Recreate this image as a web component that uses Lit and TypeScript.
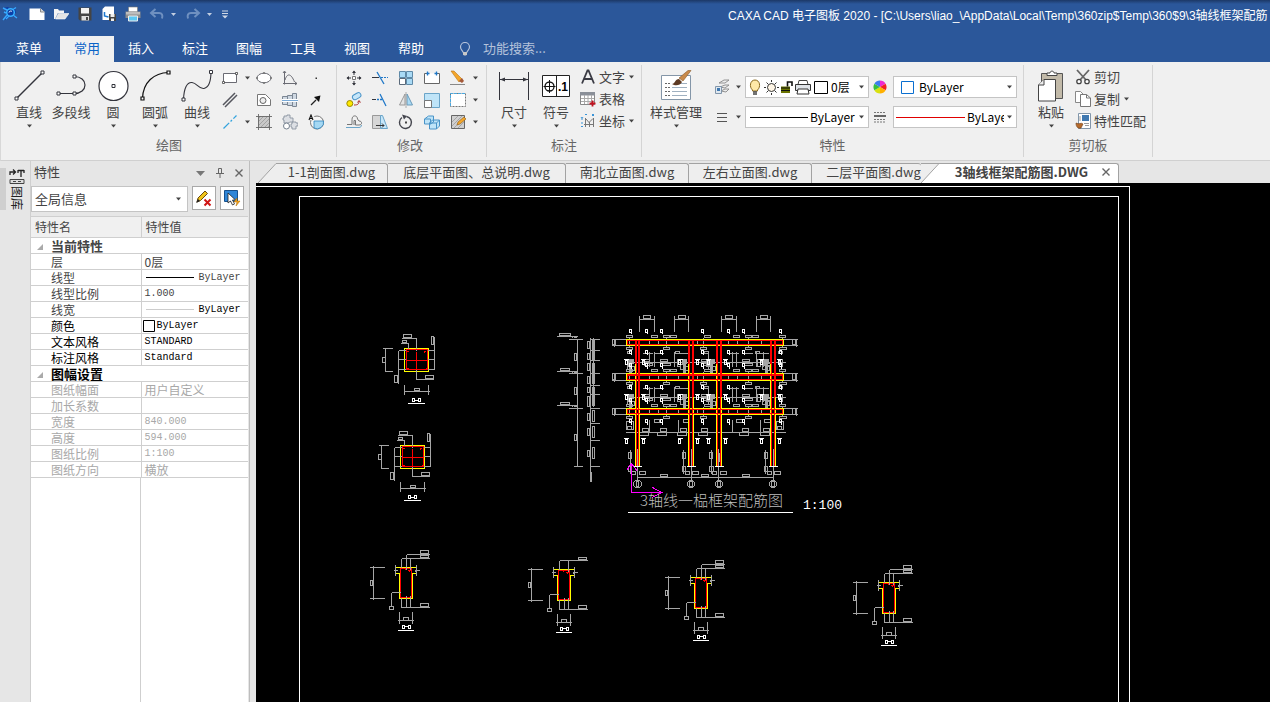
import { LitElement, html, svg, css, nothing, TemplateResult } from "lit";
import { customElement, state } from "lit/decorators.js";
import { classMap } from "lit/directives/class-map.js";

const arrow = html`<svg class="arrow" width="7" height="8" viewBox="0 0 7 8" aria-hidden="true"><path d="M1 2.500h5L3.500 5.500z" fill="#444" /></svg>`;

/* ---------- quick access icons ---------- */
const logo = html`<svg width="16" height="16" viewBox="0 0 16 16" aria-hidden="true">
  <path d="M1 2l4 2-2 3 2 1-2 6 6-4 4 1-2-3 3-1-1-5-4 1-3-2z" fill="#0b3fa8" />
  <circle cx="8.500" cy="6.500" r="3.800" fill="none" stroke="#37b2ff" stroke-width="1.500" />
  <path d="M1 2l4 2M2 6l2 1M1 14l4-5M4 13l3-3M11 9l4 3M14 1.500l-3 2" stroke="#39a8ff" stroke-width="1.400" />
  <path d="M7 6.500a1.800 1.800 0 0 1 3-1" fill="none" stroke="#d8f0ff" /></svg>`;
const qNew = html`<svg width="16" height="16" viewBox="0 0 16 16"><path d="M.5 2.500h11l4 3.500v8H.5z" fill="#fff" /><path d="M11.500 2.500V6h4" fill="#d5d5d5" stroke="#8a8a8a" /></svg>`;
const qOpen = html`<svg width="16" height="16" viewBox="0 0 16 16"><path d="M1 3h4l1 1.500h5V7H5l-3 6H1z" fill="#f4f4f4" /><path d="M5.500 7.500H16L12 13H2.500z" fill="#e4e4e4" stroke="#fff" stroke-width=".6" /></svg>`;
const qSave = html`<svg width="16" height="16" viewBox="0 0 16 16"><path d="M1.500 1.500h13v13H3L1.500 13z" fill="#444" /><path d="M4 2h8v5.500H4z" fill="#f2f2f2" /><path d="M4.500 10h7.500v4.500H4.500z" fill="#dcdcdc" /><path d="M9 11h2v3H9z" fill="#444" /></svg>`;
const qSaveAs = html`<svg width="16" height="16" viewBox="0 0 16 16"><path d="M4 .5h9v13.500H1.500V3z" fill="#fff" /><path d="M3.500 6v4l4 1" fill="none" stroke="#1c78d0" stroke-width="1.500" /><path d="M8 8h7v7H8z" fill="#444" /><path d="M9.500 8h4v3h-4zM10 12.500h3V15h-3z" fill="#eee" /></svg>`;
const qPrint = html`<svg width="16" height="16" viewBox="0 0 16 16"><path d="M3.500 1h9v5h-9z" fill="#fff" stroke="#777" stroke-width=".6" /><path d="M.5 5.500h15V12H.5z" fill="#8d8d8d" /><path d="M1 6h14v2.500H1z" fill="#bdbdbd" /><path d="M3.500 10h9v5h-9z" fill="#5ec8f2" stroke="#eee" /></svg>`;
const qUndo = html`<svg width="16" height="16" viewBox="0 0 16 16"><path d="M6.500 3L2 7l4.500 4M2.500 7H10c3 0 4 2 3 5.500" fill="none" stroke="#6f90c0" stroke-width="2" /></svg>`;
const qRedo = html`<svg width="16" height="16" viewBox="0 0 16 16"><path d="M9.500 3L14 7l-4.500 4M13.500 7H6c-3 0-4 2-3 5.500" fill="none" stroke="#6f90c0" stroke-width="2" /></svg>`;
const qMore = html`<svg width="8" height="16" viewBox="0 0 8 16"><path d="M1 5h6M1 7.500h6" stroke="#d0d8e4" /><path d="M1 9.500h6L4 12.500z" fill="#d0d8e4" /></svg>`;
const lightArrow = html`<svg width="7" height="16" viewBox="0 0 7 16"><path d="M1 7h5L3.500 10z" fill="#c3cfe2" /></svg>`;

/* ---------- large ribbon icons ---------- */
const sq = (x: number, y: number) => `M${x - 1.5} ${y - 1.5}h3v3h-3z`;
const bLine = html`<svg width="32" height="32" viewBox="0 0 32 32"><path d="M3.500 28.500l26-26" stroke="#33343c" stroke-width="1.500" /><path d=${sq(3.5, 28.5) + sq(29.5, 2.5)} fill="#fff" stroke="#33343c" /></svg>`;
const bPoly = html`<svg width="32" height="32" viewBox="0 0 32 32"><path d="M3 23.500h16c7 0 11-4 11-8.500s-4-8.500-11-8.500" fill="none" stroke="#33343c" stroke-width="1.200" /><path d=${sq(3.5, 23.5) + sq(19.5, 23.5) + sq(19.5, 6.5)} fill="#fff" stroke="#33343c" /></svg>`;
const bCircle = html`<svg width="32" height="32" viewBox="0 0 32 32"><circle cx="16.500" cy="16" r="14.500" fill="#fff" stroke="#33343c" stroke-width="1.200" /><path d=${sq(16.5, 16)} fill="#fff" stroke="#33343c" /></svg>`;
const bArc = html`<svg width="32" height="32" viewBox="0 0 32 32"><path d="M3.500 28.500C4 12 15 3 29.500 2.500" fill="none" stroke="#111" stroke-width="1.200" /><path d=${sq(3.5, 28.5) + sq(29.5, 2.5)} fill="#fff" stroke="#111" stroke-width="1.200" /></svg>`;
const bCurve = html`<svg width="32" height="32" viewBox="0 0 32 32"><path d="M2.500 29.500C3 18 6 12 11 12.500c5 .5 7 7 12 6 6-1.500 7-10 7-17" fill="none" stroke="#33343c" stroke-width="1.100" /><path d=${sq(2.5, 29.5) + sq(30, 2)} fill="#fff" stroke="#33343c" /></svg>`;
const bDim = html`<svg width="32" height="32" viewBox="0 0 32 32"><path d="M1.500 2v28M30.500 2v28M2 9.500h28" stroke="#33343c" /><path d="M2 9.500l5-2v4zM30 9.500l-5-2v4z" fill="#33343c" /></svg>`;
const bSymbol = html`<svg width="32" height="32" viewBox="0 0 32 32"><path d="M2.500 5.500h27v21h-27zM16.500 5.500v21" fill="#fff" stroke="#222" /><circle cx="9.500" cy="16.500" r="4.500" fill="none" stroke="#111" stroke-width="1.300" /><path d="M3.500 16.500h12M9.500 10v13" stroke="#111" /><text x="18" y="21" font-family="Liberation Sans, sans-serif" font-size="12" font-weight="700">.1</text></svg>`;
const bStyle = html`<svg width="32" height="32" viewBox="0 0 32 32"><path d="M1.500 5.500h29v24h-29z" fill="#fff" stroke="#8496a8" /><path d="M5 13.500h5M5 17.500h5M5 21.500h5M5 25.500h5" stroke="#666" stroke-dasharray="2 1" /><path d="M12 17.500h15M12 21.500h15M12 25.500h15M20 13.500h7" stroke="#9fb0c0" /><path d="M12 14c3 0 3-5 7-5l3 3c-2 4-7 4-10 2z" fill="#5d3a22" /><path d="M19 8l9-7.500L31 .5 23 11z" fill="#c98a4b" stroke="#8a5a2a" stroke-width=".6" /></svg>`;
const bPaste = html`<svg width="32" height="32" viewBox="0 0 32 32"><path d="M6.500 3.500h21v25h-21z" fill="#c2baa9" stroke="#555" /><path d="M12 5.500V3h3C15 .5 19 .5 19 3h3v2.500z" fill="#fff" stroke="#444" /><path d="M9 9.500h11.500v21.500H3.500V15z" fill="#fff" stroke="#444" /><path d="M9 9.500V15H3.500" fill="#eee" stroke="#444" /></svg>`;

/* ---------- small ribbon icons ---------- */
const sRect = html`<svg width="16" height="16" viewBox="0 0 16 16"><path d="M1.500 3.500h13v9h-13z" fill="#fff" stroke="#6a6b73" /><path d="M.5 11.500h2v2h-2zM13.500 2.500h2v2h-2z" fill="#fff" stroke="#444" stroke-width=".8" /></svg>`;
const sEllipse = html`<svg width="16" height="16" viewBox="0 0 16 16"><ellipse cx="8" cy="8" rx="7" ry="4.800" fill="#fff" stroke="#6a6b73" /><path d="M7.500 2.500h1v1h-1zM7.500 12.500h1v1h-1zM.5 7.500h1v1h-1zM14.500 7.500h1v1h-1z" fill="#fff" stroke="#555" stroke-width=".7" /></svg>`;
const sGraph = html`<svg width="16" height="16" viewBox="0 0 16 16"><path d="M2.500 1.500v13M1 13.500h14M1 3l1.500-2L4 3M13 12l2 1.500-2 1.500M3 10c2-7 6-7 9.500 2" fill="none" stroke="#6a6b73" /></svg>`;
const sPoint = html`<svg width="16" height="16" viewBox="0 0 16 16"><path d="M7.500 7.500h1.500v1.500H7.500z" fill="#333" /></svg>`;
const sParallel = html`<svg width="16" height="16" viewBox="0 0 16 16"><path d="M1 13L13 1M3 15L15 3" stroke="#55565e" stroke-width="1.500" /></svg>`;
const sHole = html`<svg width="16" height="16" viewBox="0 0 16 16"><path d="M1.500 2.500h8l5 5v6h-13z" fill="#fff" stroke="#777" /><circle cx="7" cy="8.500" r="3" fill="#eee" stroke="#666" /></svg>`;
const sShaft = html`<svg width="16" height="16" viewBox="0 0 16 16"><path d="M.5 4.500h5v8h-5zM5.500 3.500h5v10h-5zM10.500 1.500h4v13h-4z" fill="#cfd8e2" stroke="#7c8794" /><path d="M0 8.500h16" stroke="#fff" stroke-width="3" /><path d="M0 8.500h16" stroke="#79aad8" /></svg>`;
const sPointer = html`<svg width="16" height="16" viewBox="0 0 16 16"><path d="M3 13l5-5" stroke="#222" stroke-width="1.300" /><path d="M12.500 3.500L11 10 6 5z" fill="#111" /></svg>`;
const sCenter = html`<svg width="16" height="16" viewBox="0 0 16 16"><path d="M1.500 14.500l13-13" stroke="#34a4de" stroke-width="1.300" stroke-dasharray="8 2 2 2" /></svg>`;
const hatchBody = html`<svg width="16" height="16" viewBox="0 0 16 16"><path d="M2 2h12v12H2z" fill="#c9c9c9" /><path d="M2 8l6-6M2 12L12 2M4 14L14 4M8 14l6-6M2 5l3-3M11 14l3-3" stroke="#999" stroke-width=".8" /><path d="M2.500 0v16M13.500 0v16M0 2.500h16M0 13.500h16" stroke="#666" stroke-width=".9" /></svg>`;
const sGears = html`<svg width="16" height="16" viewBox="0 0 16 16"><path d="M2 2h3V1h3v3h3v4H8l-2 1H2V6H1V4h1zM10 8h4v1h2v3h-2v3h-4v-2H9v-3h1z" fill="#dcdfe4" stroke="#8a94a0" stroke-width=".9" /><circle cx="4.500" cy="12" r="3" fill="#fff" stroke="#74808e" /></svg>`;
const sDetail = html`<svg width="16" height="16" viewBox="0 0 16 16"><circle cx="9" cy="8.500" r="6.500" fill="#f6f6f6" stroke="#777" /><path d="M6 7h9.500A6.500 6.500 0 0 1 6 14z" fill="#a5d8f3" stroke="#2f85bf" stroke-width=".8" /><path d="M0 0h6v6H0z" fill="#f0f0f0" /><path d="M1 6l2-5 2 5M1.500 4.500h3" fill="none" stroke="#111" stroke-width="1.100" /></svg>`;

const mMove = html`<svg width="16" height="16" viewBox="0 0 16 16"><path d="M8 1v4M8 11v4M1 8h4M11 8h4" stroke="#33343c" /><path d="M8 .5l2 2.500H6zM8 15.500l2-2.500H6zM.5 8L3 6v4zM15.500 8L13 6v4z" fill="#33343c" /><path d="M6.500 6.500h3v3h-3z" fill="#fff" stroke="#777" /></svg>`;
const mTrim = html`<svg width="16" height="16" viewBox="0 0 16 16"><path d="M0 7.500h7" stroke="#33343c" /><path d="M9 7.500h7" stroke="#1f78c8" stroke-dasharray="2 1" /><path d="M5 2l7 12" stroke="#1f78c8" stroke-width="1.300" /></svg>`;
const mArray = html`<svg width="16" height="16" viewBox="0 0 16 16"><path d="M1.500 1.500h6v6h-6zM8.500 1.500h6v6h-6zM8.500 8.500h6v6h-6z" fill="#a9daf5" stroke="#5f8aa8" /><path d="M1.500 8.500h6v6h-6z" fill="#fff" stroke="#5b6a7a" /></svg>`;
const mStretch = html`<svg width="16" height="16" viewBox="0 0 16 16"><path d="M5 3.500H.5v10h15v-10H11" fill="#fff" stroke="#666" /><path d="M2.500 3.500h3M10.500 3.500h3M3.500 1.500v4M12.500 1.500v4" stroke="#1f78c8" stroke-width="1.300" /></svg>`;
const mErase = html`<svg width="16" height="16" viewBox="0 0 16 16"><path d="M1 1l3 0 8 8-3 3z" fill="#f4a62a" stroke="#b8741a" stroke-width=".6" /><path d="M9 11l3-3 2 3-2 2z" fill="#a55a3a" /><path d="M0 14.500h15" stroke="#888" /></svg>`;
const mCopy = html`<svg width="16" height="16" viewBox="0 0 16 16"><circle cx="3.800" cy="11.500" r="3" fill="#ffe800" stroke="#9a8a00" /><rect x="6" y="2" width="9" height="5" rx="2.500" transform="rotate(-30 10 4)" fill="#c5e6fa" stroke="#4a94c8" /><path d="M8 13c4 0 5-1 5-4M11.500 10.500l1.500-2 1.500 2" fill="none" stroke="#a33" /></svg>`;
const mExtend = html`<svg width="16" height="16" viewBox="0 0 16 16"><path d="M0 7.500h4" stroke="#33343c" /><path d="M5 7.500h6" stroke="#1f78c8" stroke-dasharray="2 1" stroke-width="1.300" /><path d="M8 2l6 12" stroke="#1f78c8" stroke-width="1.300" /></svg>`;
const mMirror = html`<svg width="16" height="16" viewBox="0 0 16 16"><path d="M7 2v11H1.500z" fill="#e4e4e4" stroke="#999" /><path d="M9 2v11h5.500z" fill="#a9daf5" stroke="#6a9ab8" /><path d="M8 0v16" stroke="#999" stroke-width=".8" /></svg>`;
const mScale = html`<svg width="16" height="16" viewBox="0 0 16 16"><path d="M.5 1.500h15v14H.5z" fill="#bfe4f8" stroke="#6aa4c8" /><path d="M.5 8.500h7v7h-7z" fill="#fff" stroke="#777" /></svg>`;
const mBreak = html`<svg width="16" height="16" viewBox="0 0 16 16"><path d="M.5 1.500h15v13H.5z" fill="#fff" stroke="#777" stroke-dasharray="2 1" /><path d="M.5 14V1.500H15" fill="none" stroke="#49a8e0" stroke-dasharray="3 1" /></svg>`;
const mOffset = html`<svg width="16" height="16" viewBox="0 0 16 16"><path d="M1 10.500h5V5.500c0-5 5.500-4.500 5.500-.5l1.500 2c3.500 0 3.500 4 0 4H9.500V6.500H8V11" fill="none" stroke="#777" /><path d="M0 13.500h13c1.500 0 2.500-1 2.500-2.500" fill="none" stroke="#6aa4c8" /></svg>`;
const mChamfer = html`<svg width="16" height="16" viewBox="0 0 16 16"><path d="M.5 1.500h8v13h-8z" fill="#d6d6d6" stroke="#999" /><path d="M8.500 1.500l2 0 5 13h-7z" fill="#c5e6fa" stroke="#6aa4c8" /><path d="M4 11.500h8M10 9.500l2 2-2 2" fill="none" stroke="#333" /></svg>`;
const mRotate = html`<svg width="16" height="16" viewBox="0 0 16 16"><path d="M8.500 2.500A6 6 0 1 1 4 3.500" fill="none" stroke="#44454d" stroke-width="1.400" /><path d="M4 .5l5 1.500-3 3.500z" fill="#44454d" /><path d="M7 7.500h2v2H7z" fill="#444" /></svg>`;
const mBlock = html`<svg width="16" height="16" viewBox="0 0 16 16"><path d="M.5 5l4-3h5v6l-3 2h-6zM5.500 9l3-3h7v6l-3 3h-7z" fill="#bfe4f8" stroke="#4a94c8" /><path d="M.5 5h6v5M5.500 9h7v6M12.500 9l3-3" fill="none" stroke="#4a94c8" /></svg>`;
const mHatchEdit = html`<svg width="16" height="16" viewBox="0 0 16 16"><path d="M1.500 1.500h13v13h-13z" fill="#d0d0d0" stroke="#666" /><path d="M2 8l6-6M2 12L12 2M4 14L14 4M8 14l6-6" stroke="#999" stroke-width=".8" /><path d="M7 11l1-3 6-5 2 2-6 5z" fill="#f4a62a" stroke="#8a5a1a" stroke-width=".6" /></svg>`;

const tText = html`<svg width="16" height="16" viewBox="0 0 16 16"><path d="M2 14.500L7.500 1.500h1L14 14.500M4 10h8" fill="none" stroke="#3a3b44" stroke-width="1.800" /></svg>`;
const tTable = html`<svg width="16" height="16" viewBox="0 0 16 16"><path d="M.5 1.500h14v12H.5z" fill="#fff" stroke="#888" /><path d="M0 1h15v3.500H0z" fill="#8a8f98" /><path d="M1 7.500h13M1 10.500h13M4.500 4v9M8 4v9M11.500 4v9" stroke="#aaa" /><path d="M12.500 9.500v6M9.500 12.500h6" stroke="#c1121f" stroke-width="1.800" /></svg>`;
const tCoord = html`<svg width="16" height="16" viewBox="0 0 16 16"><path d="M5.500 5v9M4 11.500h10M6 6l3 3.500 4-4M9.500 9v5M13.500 5v9" fill="none" stroke="#777" /><path d="M1 4l1 1.500L3 4M2 5.500V7M5 1.500h2M12 1l2 2M14 1l-2 2M1 13.500h2M2 9v2" stroke="#3a94d8" fill="none" /></svg>`;
const cCut = html`<svg width="16" height="16" viewBox="0 0 16 16"><path d="M2 1l9 10M14 1L5 11" stroke="#666" stroke-width="1.800" /><circle cx="4" cy="12.500" r="2.200" fill="#fff" stroke="#444" stroke-width="1.300" /><circle cx="12" cy="12.500" r="2.200" fill="#fff" stroke="#444" stroke-width="1.300" /></svg>`;
const cCopy = html`<svg width="16" height="16" viewBox="0 0 16 16"><path d="M.5.500h5l2.500 2.500v8.500H.5z" fill="#fff" stroke="#888" /><path d="M5.500 3.500h6l4 3.500v8.500h-10z" fill="#fff" stroke="#777" /><path d="M11.500 3.500V7h4" fill="none" stroke="#777" /></svg>`;
const cMatch = html`<svg width="16" height="16" viewBox="0 0 16 16"><path d="M3.500.5h12v15h-12z" fill="#fff" stroke="#8296aa" /><path d="M7 2h7v6H7z" fill="#3f78b0" /><path d="M9 10.500h5M10 12.500h4M5 3v5" stroke="#999" /><path d="M1 10c3 2 5-1 7 1l-2 4c-3 1-5-1-5-5z" fill="#b56a2c" stroke="#6d3a14" stroke-width=".6" /></svg>`;

const pLayers = html`<svg width="16" height="16" viewBox="0 0 16 16"><path d="M5 4l5-3h5l-4 3zM6 8l5-2h4l-4 3zM7 12l4-2h4l-3 3z" fill="#eee" stroke="#888" stroke-width=".9" /><path d="M1.500 7.500h6v7h-6z" fill="#dfe8f0" stroke="#8296aa" /><path d="M3 9h3v3H3z" fill="#3f78b0" /></svg>`;
const pLines = html`<svg width="16" height="16" viewBox="0 0 16 16"><path d="M3 4.500h10M3 8.500h10M3 12.500h10" stroke="#555" stroke-width="1.200" /></svg>`;
const pWheel = html`<svg width="16" height="16" viewBox="0 0 16 16"><path d="M8 8V1.500a6.500 6.500 0 0 1 5.600 3.200z" fill="#ee2ad0" /><path d="M8 8l5.600-3.300a6.500 6.500 0 0 1 0 6.600z" fill="#f22020" /><path d="M8 8l5.600 3.300A6.500 6.500 0 0 1 8 14.500z" fill="#ffb000" /><path d="M8 8v6.500a6.500 6.500 0 0 1-5.600-3.200z" fill="#d8e010" /><path d="M8 8l-5.600 3.300a6.500 6.500 0 0 1 0-6.600z" fill="#35c040" /><path d="M8 8L2.400 4.700A6.500 6.500 0 0 1 8 1.500z" fill="#3c7cf0" /></svg>`;
const pWeights = html`<svg width="16" height="16" viewBox="0 0 16 16"><path d="M2 3.500h12M2 10.500h12M2 13h12" stroke="#777" stroke-dasharray="2 1" /><path d="M2 7h12" stroke="#444" stroke-width="1.600" /></svg>`;
const layerState = html`<svg width="82" height="18" viewBox="0 0 82 18" aria-hidden="true">
  <path d="M5.500 12C2 9 3 2 8 2S14 9 10.500 12v1h-5z" fill="#ffe9a8" stroke="#8a6a20" /><path d="M6 14h4M6 16h4" stroke="#444" stroke-width="1.400" />
  <circle cx="24.500" cy="9.500" r="4" fill="#fff6e6" stroke="#333" /><path d="M24.500 2v2M24.500 15v2M17 9.500h2M30 9.500h2M19.500 4.500l1.500 1.500M28 13l1.500 1.500M29.500 4.500L28 6M21 13l-1.500 1.500" stroke="#333" />
  <path d="M34 8.500h9v6.500h-9z" fill="#6b7400" /><path d="M34 10h9M34 12.500h9" stroke="#111" /><path d="M40.500 8.500V4h4.500v4" fill="none" stroke="#111" stroke-width="1.600" />
  <path d="M52 2.500h8l1 4h-10z" fill="#fff" stroke="#444" /><path d="M48.500 6.500h15v6h-15z" fill="#dfe3e8" stroke="#333" /><path d="M51 11h10l1 5H50z" fill="#fff" stroke="#333" />
  <path d="M67.500 3.500h13v12h-13z" fill="#fff" stroke="#000" /></svg>`;

interface Cmd { label: string; icon: TemplateResult; drop?: boolean; }

const drawBig: Cmd[] = [
  { label: "直线", icon: bLine, drop: true },
  { label: "多段线", icon: bPoly },
  { label: "圆", icon: bCircle, drop: true },
  { label: "圆弧", icon: bArc, drop: true },
  { label: "曲线", icon: bCurve, drop: true },
];
const drawSmall: Cmd[] = [
  { label: "矩形", icon: sRect, drop: true }, { label: "椭圆", icon: sEllipse }, { label: "公式曲线", icon: sGraph }, { label: "点", icon: sPoint },
  { label: "平行线", icon: sParallel }, { label: "孔/轴", icon: sHole }, { label: "轴", icon: sShaft }, { label: "箭头", icon: sPointer },
  { label: "中心线", icon: sCenter, drop: true }, { label: "剖面线", icon: hatchBody }, { label: "齿形", icon: sGears }, { label: "局部放大", icon: sDetail },
];
const modifySmall: Cmd[] = [
  { label: "平移", icon: mMove }, { label: "裁剪", icon: mTrim }, { label: "阵列", icon: mArray }, { label: "拉伸", icon: mStretch }, { label: "删除", icon: mErase, drop: true },
  { label: "平移复制", icon: mCopy }, { label: "延伸", icon: mExtend }, { label: "镜像", icon: mMirror }, { label: "缩放", icon: mScale }, { label: "打断", icon: mBreak, drop: true },
  { label: "等距线", icon: mOffset }, { label: "过渡", icon: mChamfer }, { label: "旋转", icon: mRotate }, { label: "块", icon: mBlock }, { label: "编辑填充", icon: mHatchEdit, drop: true },
];

/* ---------- property panel ---------- */
interface Row { name: string; value: string; kind?: "line" | "thin" | "color" | "text"; tone?: string; }
const current: Row[] = [
  { name: "层", value: "0层", kind: "text" },
  { name: "线型", value: "ByLayer", kind: "line" },
  { name: "线型比例", value: "1.000" },
  { name: "线宽", value: "ByLayer", kind: "thin" },
  { name: "颜色", value: "ByLayer", kind: "color", tone: "strong" },
  { name: "文本风格", value: "STANDARD", tone: "strong" },
  { name: "标注风格", value: "Standard", tone: "strong" },
];
const sheet: Row[] = [
  { name: "图纸幅面", value: "用户自定义", kind: "text", tone: "off" },
  { name: "加长系数", value: "", tone: "off" },
  { name: "宽度", value: "840.000", tone: "off" },
  { name: "高度", value: "594.000", tone: "off" },
  { name: "图纸比例", value: "1:100", tone: "off" },
  { name: "图纸方向", value: "横放", kind: "text", tone: "off" },
];

@customElement("property-panel")
export class PropertyPanel extends LitElement {
  static styles = css`
    :host { display: flex; width: 256px; flex: none; background: #e6e6e6; font-family: "Noto Sans CJK SC", sans-serif; font-size: 12px; color: #444; }
    button { font: inherit; color: inherit; padding: 0; border: 0; background: none; }
    svg { display: block; }
    .rail { width: 30px; flex: none; display: flex; align-items: flex-start; padding-top: 7px; box-sizing: border-box; }
    .edge { width: 6px; height: 42px; background: #cfcfcf; }
    .vtab { margin-left: 3px; width: 16px; display: flex; flex-direction: column; align-items: center; }
    .vtext { writing-mode: vertical-rl; text-orientation: sideways; line-height: 16px; color: #222; }
    .panel { width: 220px; box-sizing: border-box; display: flex; flex-direction: column; border-left: 1px solid #cfcfcf; border-right: 1px solid #bdbdbd; }
    .head { display: flex; align-items: center; height: 24px; padding: 0 1px 0 3px; }
    .head h2 { font-size: 13px; font-weight: 400; margin: 0; flex: 1; line-height: 20px; padding-bottom: 2px; }
    .head button { width: 19px; height: 16px; display: grid; place-items: center; }
    .tools { display: flex; gap: 4px; padding: 1px 5px 4px 0; align-items: flex-start; }
    .combo { flex: 1; min-width: 0; display: flex; align-items: center; height: 26px; box-sizing: border-box; border: 1px solid #c4c4c4; background: #fff; padding: 0 5px 0 3px; }
    .combo select { flex: 1; min-width: 0; height: 22px; appearance: none; border: 0; background: none; font: 13px/20px "Noto Sans CJK SC", sans-serif; color: #444; padding: 0; }
    .tool { width: 24px; height: 24px; border: 1px solid #a9a9a9; background: #fff; display: grid; place-items: center; }
    .gridbox { flex: 1; display: flex; flex-direction: column; background: #fff; border-top: 1px solid #cfcfcf; margin-right: 1px; }
    table { border-collapse: collapse; table-layout: fixed; width: 100%; }
    th, td { border: 0 solid #cfcfcf; border-bottom-width: 1px; padding: 0; height: 15px; line-height: 15px; font-weight: 400; text-align: left; white-space: nowrap; overflow: hidden; }
    thead th { height: 20px; line-height: 20px; background: #f0f0f0; padding-left: 4px; font-size: 12px; }
    thead th:first-child, .name { border-right-width: 1px; }
    .c1 { width: 110px; }
    .name { padding-left: 20px; }
    .value { padding-left: 3px; }
    .mono { font-family: "Liberation Mono", monospace; font-size: 10px; }
    .section { font-weight: 700; font-size: 13px; }
    .section.strong { color: #000; }
    .tri { display: inline-block; margin: 0 8px 0 6px; vertical-align: middle; }
    .strong { color: #000; }
    .off { color: #a8a8a8; }
    .cell { display: flex; align-items: center; gap: 5px; height: 15px; }
    .cell.tight { gap: 1px; margin-left: -3px; }
    .rest { flex: 1; width: 109px; border-right: 1px solid #cfcfcf; }
  `;

  private cell(r: Row) {
    switch (r.kind) {
      case "line": return html`<span class="cell"><svg width="49" height="3"><path d="M1 1.500h48" stroke="#000" /></svg>${r.value}</span>`;
      case "thin": return html`<span class="cell strong"><svg width="49" height="3"><path d="M1 1.500h48" stroke="#ccc" /></svg>${r.value}</span>`;
      case "color": return html`<span class="cell tight"><svg width="14" height="14"><path d="M1.500 1.500h11v11h-11z" fill="#fff" stroke="#000" /></svg>${r.value}</span>`;
      default: return r.value;
    }
  }

  private row = (r: Row) => html`<tr class=${r.tone ?? ""}>
    <td class="name">${r.name}</td>
    <td class=${classMap({ value: true, mono: r.kind !== "text" })}>${this.cell(r)}</td>
  </tr>`;

  private section(title: string, strong: boolean) {
    return html`<tr><th colspan="2" class=${classMap({ section: true, strong })}><svg class="tri" width="6" height="6"><path d="M6 0v6H0z" fill="#aaa" /></svg>${title}</th></tr>`;
  }

  render() {
    return html`
      <div class="rail">
        <span class="edge"></span>
        <button class="vtab" aria-label="图库">
          <svg width="16" height="18" viewBox="0 0 16 18"><path d="M1 7V4h5M4 1.500L6.500 4 4 6.500M9 2.500h6M9 2v3M15 2v3M12 3v6" fill="none" stroke="#222" stroke-width="1.300" /><path d="M1 11.500h14v4H1zM4 13.500h3M9 13.500h3" fill="#ddd" stroke="#444" /></svg>
          <span class="vtext">图库</span>
        </button>
      </div>
      <section class="panel">
        <div class="head">
          <h2>特性</h2>
          <button aria-label="菜单"><svg width="9" height="5"><path d="M0 0h9L4.500 5z" fill="#777" /></svg></button>
          <button aria-label="固定"><svg width="8" height="10"><path d="M2.500.5h3v5h-3zM0 5.500h8M4 6v4" fill="none" stroke="#666" /></svg></button>
          <button aria-label="关闭"><svg width="8" height="8"><path d="M.5.500l7 7M7.500.500l-7 7" stroke="#666" stroke-width="1.400" /></svg></button>
        </div>
        <div class="tools">
          <span class="combo"><select aria-label="选择对象"><option>全局信息</option></select>${arrow}</span>
          <button class="tool" aria-label="清除"><svg width="18" height="18" viewBox="0 0 18 18"><path d="M2 13l1-4 7-7 2.500 2.500-7 7z" fill="#f0c419" stroke="#6b4a10" /><path d="M1 14l2-4 2 2z" fill="#222" /><path d="M9.500 10.500l6 6M15.500 10.500l-6 6" stroke="#d01414" stroke-width="2" /></svg></button>
          <button class="tool" aria-label="选择"><svg width="18" height="18" viewBox="0 0 18 18"><path d="M1.500 1.500h13v11h-13z" fill="#2f86d8" stroke="#17508c" /><path d="M5 4v10l2.500-2 2 4 2-1-2-4h3z" fill="#fff" stroke="#222" stroke-width=".8" /><path d="M14 9l-3 4h3l-1 4 4-5h-3z" fill="#f4a520" stroke="#b36c00" stroke-width=".5" /></svg></button>
        </div>
        <div class="gridbox">
          <table>
            <colgroup><col class="c1" /><col /></colgroup>
            <thead><tr><th>特性名</th><th>特性值</th></tr></thead>
            <tbody>${this.section("当前特性", false)}${current.map(this.row)}${this.section("图幅设置", true)}${sheet.map(this.row)}</tbody>
          </table>
          <div class="rest"></div>
        </div>
      </section>`;
  }
}

/* ---------- drawing ---------- */
/* Model coordinates use three units per pixel; every vertex lands on a pixel centre. */
const px = (v: number) => Math.floor((v - 0.5) / 3) + 0.5;
const poly = (...p: number[]) => p.reduce((s, v, i) => s + (i % 2 ? ` ${px(v)}` : `${i ? "L" : "M"}${px(v)}`), "");
const ln = (x1: number, y1: number, x2: number, y2: number) => poly(x1, y1, x2, y2);
const bx = (x: number, y: number, w: number, h: number) => poly(x, y, x + w, y, x + w, y + h, x, y + h, x, y) + "z";

function elevation() {
  let grey = "", white = "", yellow = "", red = "", dense = "";
  const cols = [[257, 268], [416, 431], [500, 514], [662, 677]];
  const beams = [[119, 136], [221, 241], [326, 344]];
  for (const [a, b] of [[268, 313], [373, 415], [514, 559], [619, 661]]) {
    grey += ln(a, 48, a, 96) + ln(b, 48, b, 96) + ln(a, 58, b, 58) + bx(a + 12, 46, 21, 9);
  }
  const qs = [240, 288, 331, 454, 533, 577, 689];
  const q = (x: number, y: number) => bx(x, y, 6, 9) + ln(x + 6, y + 9, x + 6, y + 13);
  const tee = (x: number, y: number) => ln(x - 7, y, x + 7, y) + bx(x - 3, y + 3, 6, 11);
  const tees = [229, 280, 390, 442, 475, 526, 634, 688];
  for (const x of qs) white += q(x, 88);

  beams.forEach(([t, b], i) => {
    yellow += bx(230, t, 471, b - t);
    red += bx(233, t + 3, 465, b - t - 6);
    if (i === 1) red += ln(233, t + 6, 698, t + 6);
    for (const s of [0, 1]) {
      const x0 = s ? 702 : 184, x1 = s ? 744 : 226, bxx = s ? 728 : 188;
      grey += ln(x0, t, x1, t) + ln(x0, b, x1, b) + bx(bxx, t + 1, 8, b - t - 2) + ln(s ? 739 : 194, t - 4, s ? 739 : 194, b + 4);
    }
    for (const x of [229, 304, 340, 361, 463, 550, 586, 607, 689]) grey += bx(x, t - 13, 19, 7);
    for (const x of [229, 340, 451, 586, 689]) grey += bx(x, b + 6, 20, 7) + ln(x + 10, t - 6, x + 10, b + 6);
    for (const x of [298, 325, 386, 442, 535, 562, 634]) grey += ln(x, t, x, b);
    for (const x of qs) white += q(x, b + 16);

    if (i < 2) {
      const y = b + 51;
      grey += ln(240, y, 706, y);
      for (const x of [277, 331, 454, 577, 631]) grey += bx(x, y - 9, 21, 8) + bx(x + 6, y + 3, 24, 8);
      for (const x of [236, 382, 469, 622, 689]) grey += bx(x, b + 42, 9, 22) + bx(x - 4, b + 18, 12, 8);
      for (const x of [300, 313, 373, 475, 547, 559, 619, 640]) grey += ln(x, b + 18, x, y + 14);
      for (const x of [277, 310, 382, 535, 577, 625]) grey += ln(x, b + 24, x + 30, b + 24);
      for (const x of [244, 405, 487, 650]) {
        dense += bx(x - 7, y - 8, 13, 12) + bx(x - 4, y + 4, 6, 26);
        grey += bx(x - 12, y + 6, 10, 16) + bx(x + 2, y + 12, 8, 14);
      }
      for (const x of qs) white += q(x, b + 56);
      for (const x of tees) white += tee(x, b + 43);
    } else {
      grey += ln(226, 397, 706, 397);
      for (const x of [277, 331, 391, 454, 577, 640]) grey += bx(x, 387, 20, 9) + bx(x - 8, 399, 28, 7);
      for (const x of [229, 679]) grey += bx(x, 364, 22, 26) + bx(x + 3, 380, 14, 9);
      for (const x of [300, 386, 547, 631]) grey += ln(x, 360, x, 397) + bx(x + 14, 360, 16, 8);
      for (const x of tees) white += tee(x, 416);
    }
  });

  for (const [l, r] of cols) {
    yellow += ln(l, 137, l, 498) + ln(r, 137, r, 498);
    red += ln(l + 3, 123, l + 3, 498) + ln(r - 3, 123, r - 3, 498) + ln(l, 123, l, 190) + ln(r, 123, r, 290);
    const c = (l + r) / 2;
    white += ln(l - 6, 499, r + 6, 499);
    grey += ln(c, 445, c, 540) + bx(c + 1, 460, 5, 24) + bx(c + 5, 514, 18, 9);
    grey += bx(c - 27, 457, 9, 18) + ln(c - 22, 450, c - 22, 520) + bx(c - 27, 499, 10, 16) + bx(c - 18, 514, 12, 9);
    grey += poly(c - 5, 542, c + 5, 542, c + 11, 548, c + 11, 558, c + 5, 564, c - 5, 564, c - 11, 558, c - 11, 548, c - 5, 542) + bx(c - 4, 546, 8, 13);
  }
  grey += ln(263, 532, 667, 532) + bx(331, 523, 21, 8) + bx(454, 523, 21, 8) + bx(577, 523, 21, 8);

  grey += ln(82, 118, 82, 499) + ln(57, 119, 97, 119) + ln(57, 221, 97, 221) + ln(57, 325, 97, 325) + ln(72, 499, 97, 499);
  grey += bx(73, 160, 8, 21) + bx(73, 262, 8, 21) + bx(73, 403, 8, 18);
  for (const [y, x, w] of [[109, 28, 33], [214, 31, 27], [317, 31, 27]]) grey += ln(19, y, 82, y) + bx(x, y - 9, w, 7) + ln(64, y, 70, y + 7) + ln(70, y + 7, 76, y) + ln(76, y, 81, y + 7);
  grey += ln(122, 114, 122, 545) + ln(124, 515, 124, 545) + ln(131, 114, 131, 320);
  for (const y of [119, 151, 181, 221, 256, 283, 325, 370, 421, 499]) grey += ln(122, y, 149, y);
  for (const [y, h] of [[124, 21], [160, 18], [190, 21], [229, 21], [262, 15], [289, 31], [340, 21], [385, 21], [451, 18]]) grey += bx(112, y, 8, h);
  for (const [y, h] of [[118, 62], [190, 60], [262, 56], [331, 33], [379, 33], [442, 33]]) grey += bx(127, y, 6, h);
  return { grey, white, yellow, red, dense };
}

function squareSection(dx: number, dy: number) {
  return svg`<g transform="translate(${dx} ${dy})">
    <path class="y" d=${bx(133, 86, 73, 68)} />
    <path class="g" d=${ln(76, 82, 76, 156) + ln(69, 86, 98, 86) + ln(76, 154, 98, 154) + bx(67, 112, 9, 15)
      + ln(115, 91, 115, 190) + ln(115, 91, 140, 91) + ln(115, 118, 140, 118) + ln(115, 149, 140, 149) + bx(103, 166, 11, 21)
      + ln(223, 49, 223, 149) + ln(200, 91, 223, 91) + ln(200, 118, 223, 118) + ln(200, 149, 223, 149) + bx(214, 49, 8, 24)
      + ln(124, 55, 170, 55) + ln(170, 55, 170, 92) + bx(130, 43, 25, 10) + ln(121, 70, 146, 70) + ln(146, 70, 146, 90) + bx(127, 61, 13, 7)
      + ln(170, 148, 170, 178) + ln(170, 178, 221, 178) + bx(196, 166, 25, 11)
      + ln(133, 195, 133, 223) + ln(206, 195, 206, 223) + ln(133, 214, 209, 214) + bx(163, 205, 16, 8)} />
    <path class="r" d=${bx(139, 89, 63, 61) + ln(170, 94, 170, 147) + ln(139, 122, 203, 122) + ln(190, 95, 197, 95) + ln(194, 91, 194, 98) + ln(139, 146, 145, 146) + ln(196, 146, 202, 146) + ln(139, 94, 145, 94)} />
    <path class="w" d=${bx(157, 236, 6, 9) + ln(164, 241, 176, 241) + bx(175, 236, 6, 9) + ln(144, 250, 195, 250)} />
  </g>`;
}

function teeSection(dx: number, dy: number, single: boolean) {
  const top = single
    ? ln(154, 55, 240, 55) + bx(211, 46, 25, 7)
    : ln(154, 55, 240, 55) + ln(169, 43, 240, 43) + ln(169, 43, 169, 90) + bx(211, 31, 25, 10) + bx(211, 46, 25, 8);
  return svg`<g transform="translate(${dx} ${dy})">
    <path class="y" d=${ln(136, 82, 200, 82) + poly(136, 100, 148, 100, 148, 175, 187, 175, 187, 100, 200, 100)} />
    <path class="r" d=${bx(152, 86, 32, 86) + ln(174, 92, 182, 92) + ln(178, 89, 178, 96) + ln(166, 89, 166, 86)} />
    <path class="g" d=${ln(136, 75, 136, 107) + ln(199, 75, 199, 107) + ln(130, 91, 143, 91) + ln(193, 91, 210, 91) + ln(133, 95, 137, 95) + ln(195, 95, 199, 95)
      + ln(70, 78, 70, 180) + ln(60, 82, 105, 82) + ln(60, 175, 105, 175) + bx(61, 121, 8, 15)
      + top + ln(154, 55, 154, 84) + ln(181, 55, 181, 90)
      + ln(154, 174, 154, 202) + ln(169, 168, 169, 202) + ln(181, 168, 181, 202) + ln(154, 202, 240, 202) + bx(211, 190, 25, 11)
      + ln(152, 157, 124, 157) + ln(124, 157, 124, 198) + bx(118, 199, 12, 9)
      + ln(148, 216, 148, 252) + ln(187, 216, 187, 252) + ln(144, 242, 192, 242) + bx(160, 232, 16, 9)} />
    <path class="w" d=${bx(157, 256, 6, 9) + ln(164, 261, 175, 261) + bx(175, 256, 6, 9) + ln(144, 271, 192, 271)} />
  </g>`;
}

@customElement("drawing-view")
export class DrawingView extends LitElement {
  static styles = css`
    :host { display: flex; flex: 1; min-height: 0; min-width: 0; background: #000; overflow: hidden; }
    svg { display: block; width: 100%; height: 100%; }
    path { fill: none; stroke-width: 1; shape-rendering: crispEdges; }
    .g { stroke: #a6a6a6; }
    .w { stroke: #fff; }
    .y { stroke: #ff0; }
    .r { stroke: #f00; }
    .m { stroke: #f0f; }
    .fill { fill: #a6a6a6; stroke: #a6a6a6; }
    .title { fill: #bdbdbd; font: 15px "Noto Sans CJK SC", sans-serif; font-weight: 300; }
    .scale { fill: #fff; font: 13px "Liberation Mono", monospace; }
  `;

  render() {
    const e = elevation();
    return html`<svg role="img" aria-label="3轴线框架配筋图">
      <g transform="translate(-256 -183)">
        <path class="w" d="M256 186.500H1129.500V2000M299.500 2000V196.500H1118.500V2000" />
        <g transform="translate(550 300)">
          <path class="g" d=${e.grey} />
          <path class="fill" d=${e.dense} />
          <path class="y" d=${e.yellow} />
          <path class="r" d=${e.red} />
          <path class="w" d=${e.white} />
          <path class="m" d=${poly(244, 487, 244, 577, 334, 577) + poly(229, 512, 244, 490, 262, 514) + poly(307, 562, 334, 577, 307, 592)} />
          <path class="w" d=${ln(234, 638, 729, 638)} />
        </g>
        <g transform="translate(360 320)">${squareSection(0, 0)}${squareSection(-4, 97)}</g>
        <g transform="translate(350 540)">
          ${teeSection(0, 0, false)}${teeSection(158, 2, true)}${teeSection(295, 10, false)}${teeSection(483, 15, false)}
        </g>
        <text class="title" x="640" y="506">3轴线一榀框架配筋图</text>
        <text class="scale" x="803" y="509">1:100</text>
      </g>
    </svg>`;
  }
}

/* ---------- application ---------- */
@customElement("app-root")
export class AppRoot extends LitElement {
  static styles = css`
    :host { display: flex; flex-direction: column; height: 100vh; overflow: hidden; background: #e6e6e6; color: #444; font-family: "Noto Sans CJK SC", sans-serif; font-size: 13px; }
    button { font: inherit; color: inherit; padding: 0; border: 0; background: none; cursor: default; }
    svg { display: block; flex: none; }
    header { flex: none; background: linear-gradient(#1c3866, #2b579a 4px); color: #fff; }
    .titlebar { display: flex; height: 28px; align-items: center; padding-left: 2px; }
    .quick { display: flex; align-items: center; gap: 8px; width: 726px; flex: none; }
    .quick button, .pair { display: flex; }
    .pair { gap: 5px; }
    .appicon { margin-right: 3px; }
    .caption { margin: 0; flex: 1; min-width: 0; overflow: hidden; padding-top: 4px; font: 12px/18px "Liberation Sans", "Noto Sans CJK SC", sans-serif; white-space: nowrap; }
    .menubar { display: flex; height: 34px; align-items: flex-end; }
    .menubar button { width: 54px; height: 26px; line-height: 22px; padding-bottom: 2px; }
    .menubar .file { width: 60px; padding-right: 2px; }
    .menubar .active { background: #f0f0f0; color: #0a64c8; }
    .search { display: flex; align-items: center; gap: 12px; height: 26px; padding-left: 21px; }
    .search input { width: 120px; border: 0; background: none; outline: none; font: inherit; color: #fff; padding: 0 0 4px; height: 20px; }
    .search input::placeholder { color: #b4c2da; opacity: 1; }

    .ribbon { flex: none; display: flex; background: #f0f0f0; border-left: 1px solid #d8d8d8; border-bottom: 1px solid #d0d0d0; padding: 3px 0 3px 1px; }
    .group { display: flex; flex-direction: column; padding: 2px 6px 0; border-right: 1px solid #d4d4d4; }
    .body { display: flex; height: 66px; }
    .group h3 { margin: 0; font-size: 13px; font-weight: 400; line-height: 24px; color: #666; text-align: center; }
    .big { width: 42px; display: flex; flex-direction: column; align-items: center; padding-top: 3px; white-space: nowrap; }
    .big.wide { width: 56px; }
    .big span { line-height: 20px; }
    .tiles { display: grid; grid-auto-rows: 22px; }
    .draw { grid-template-columns: 34px repeat(3, 26px); }
    .modify { grid-template-columns: repeat(4, 26px) 34px; }
    .group.snug { padding: 2px 7px 0 4px; }
    .tile { display: flex; align-items: center; padding-left: 4px; gap: 6px; }
    .modify .tile { padding-left: 5px; }
    .list { display: flex; flex-direction: column; }
    .item { display: flex; align-items: center; gap: 3px; height: 22px; padding: 0 0 2px 3px; line-height: 18px; white-space: nowrap; }
    .props { display: grid; grid-template-columns: 21px 8px 129px 21px 124px; grid-auto-rows: 22px; row-gap: 8px; padding: 9px 0 0 10px; align-items: center; }
    .combo { display: flex; align-items: center; gap: 2px; height: 22px; box-sizing: border-box; border: 1px solid #c4c4c4; background: #fff; padding: 0 3px 0 1px; margin: 0 3px 0 2px; }
    .combo select { flex: 1; min-width: 0; width: 0; appearance: none; border: 0; background: none; padding: 0; font: 12px/18px "Noto Sans CJK SC", sans-serif; color: #000; }
    .combo.pad { padding-left: 7px; gap: 5px; }
    .combo.last { margin: 0; }

    .work { flex: 1; display: flex; min-height: 0; }
    .docs { flex: 1; min-width: 0; display: flex; flex-direction: column; }
    .tabs { flex: none; display: flex; height: 22px; box-sizing: border-box; padding: 2px 0 0 2px; background: #e6e6e6; overflow: hidden; }
    .tab { display: flex; align-items: center; justify-content: center; height: 20px; box-sizing: border-box; border: solid #a2a2a2; border-width: 1px 1px 0 0; border-radius: 0 3px 0 0; background: #eee; line-height: 16px; padding-bottom: 3px; white-space: nowrap; }
    .slant { width: 18px; height: 20px; }
    .t0 { width: 112px; }
    .t1 { width: 178px; }
    .t2, .t3 { width: 123px; }
    .t4 { width: 109px; padding-left: 14px; border-right: 0; }
    .current { width: 180px; background: #fff; font-weight: 700; gap: 14px; padding-left: 8px; }
  `;

  @state() private menu = "常用";

  private bigBtn(c: Cmd, wide = false) {
    return html`<button class=${classMap({ big: true, wide })}>${c.icon}<span>${c.label}</span>${c.drop ? arrow : nothing}</button>`;
  }
  private tile = (c: Cmd) => html`<button class="tile" aria-label=${c.label}>${c.icon}${c.drop ? arrow : nothing}</button>`;
  private item = (c: Cmd) => html`<button class="item">${c.icon}${c.label}${c.drop ? arrow : nothing}</button>`;

  render() {
    const docs = ["1-1剖面图.dwg", "底层平面图、总说明.dwg", "南北立面图.dwg", "左右立面图.dwg", "二层平面图.dwg"];
    return html`
      <header>
        <div class="titlebar">
          <div class="quick">
            <span class="appicon">${logo}</span>
            <button aria-label="新建">${qNew}</button>
            <button aria-label="打开">${qOpen}</button>
            <button aria-label="保存">${qSave}</button>
            <button aria-label="另存为">${qSaveAs}</button>
            <button aria-label="打印">${qPrint}</button>
            <button class="pair" aria-label="撤销">${qUndo}${lightArrow}</button>
            <button class="pair" aria-label="重做">${qRedo}${lightArrow}</button>
            <button aria-label="自定义">${qMore}</button>
          </div>
          <h1 class="caption">CAXA CAD 电子图板 2020 - [C:\\Users\\liao_\\AppData\\Local\\Temp\\360zip$Temp\\360$9\\3轴线框架配筋</h1>
        </div>
        <nav class="menubar">
          <button class="file">菜单</button>
          ${["常用", "插入", "标注", "图幅", "工具", "视图", "帮助"].map((m) => html`<button class=${classMap({ active: this.menu === m })} @click=${() => (this.menu = m)}>${m}</button>`)}
          <label class="search">
            <svg width="12" height="14" viewBox="0 0 12 14"><path d="M4 10.500C4 8.500 1.500 8 1.500 5a4.300 4.300 0 0 1 9 0c0 3-2.500 3.500-2.500 5.500" fill="none" stroke="#b4c2da" stroke-width="1.200" /><path d="M4 10h4v2.500l-1 1H5l-1-1z" fill="#c8c8c8" /></svg>
            <input type="text" aria-label="功能搜索" placeholder="功能搜索..." />
          </label>
        </nav>
      </header>

      <div class="ribbon">
        <section class="group">
          <div class="body">${drawBig.map((c) => this.bigBtn(c))}<div class="tiles draw">${drawSmall.map(this.tile)}</div></div>
          <h3>绘图</h3>
        </section>
        <section class="group snug">
          <div class="body"><div class="tiles modify">${modifySmall.map(this.tile)}</div></div>
          <h3>修改</h3>
        </section>
        <section class="group">
          <div class="body">
            ${this.bigBtn({ label: "尺寸", icon: bDim, drop: true })}${this.bigBtn({ label: "符号", icon: bSymbol, drop: true })}
            <div class="list">${[{ label: "文字", icon: tText, drop: true }, { label: "表格", icon: tTable }, { label: "坐标", icon: tCoord, drop: true }].map(this.item)}</div>
          </div>
          <h3>标注</h3>
        </section>
        <section class="group">
          <div class="body">
            ${this.bigBtn({ label: "样式管理", icon: bStyle, drop: true }, true)}
            <div class="props">
              <button aria-label="图层">${pLayers}</button>${arrow}
              <span class="combo">${layerState}<select aria-label="当前层"><option>0层</option></select>${arrow}</span>
              <button aria-label="颜色">${pWheel}</button>
              <span class="combo pad last"><svg width="13" height="13"><path d="M.5.500h12v12H.5z" fill="#fff" stroke="#0a6fd0" /></svg><select aria-label="颜色"><option>ByLayer</option></select>${arrow}</span>
              <button aria-label="线型">${pLines}</button>${arrow}
              <span class="combo"><svg width="61" height="3"><path d="M3 1.500h58" stroke="#000" /></svg><select aria-label="线型"><option>ByLayer</option></select>${arrow}</span>
              <button aria-label="线宽">${pWeights}</button>
              <span class="combo last"><svg width="70" height="3"><path d="M1 1.500h69" stroke="#e00000" /></svg><select aria-label="线宽"><option>ByLayer</option></select>${arrow}</span>
            </div>
          </div>
          <h3>特性</h3>
        </section>
        <section class="group">
          <div class="body">
            ${this.bigBtn({ label: "粘贴", icon: bPaste, drop: true })}
            <div class="list">${[{ label: "剪切", icon: cCut }, { label: "复制", icon: cCopy, drop: true }, { label: "特性匹配", icon: cMatch }].map(this.item)}</div>
          </div>
          <h3>剪切板</h3>
        </section>
      </div>

      <div class="work">
        <property-panel></property-panel>
        <main class="docs">
          <nav class="tabs">
            <svg class="slant" viewBox="0 0 18 20"><path d="M0 20L18 0V20z" fill="#eee" /><path d="M0 20L18 .500" stroke="#a2a2a2" /></svg>
            ${docs.map((d, i) => html`<button class="tab t${i}">${d}</button>`)}
            <svg class="slant" viewBox="0 0 18 20"><path d="M0 0H18V20H0z" fill="#eee" /><path d="M0 20L18 0V20z" fill="#fff" /><path d="M0 .500H18M0 20L18 .500" stroke="#a2a2a2" /></svg>
            <button class="tab current">3轴线框架配筋图.DWG<svg width="8" height="8"><path d="M.5.500l7 7M7.500.500l-7 7" stroke="#666" stroke-width="1.400" /></svg></button>
          </nav>
          <drawing-view></drawing-view>
        </main>
      </div>`;
  }
}
